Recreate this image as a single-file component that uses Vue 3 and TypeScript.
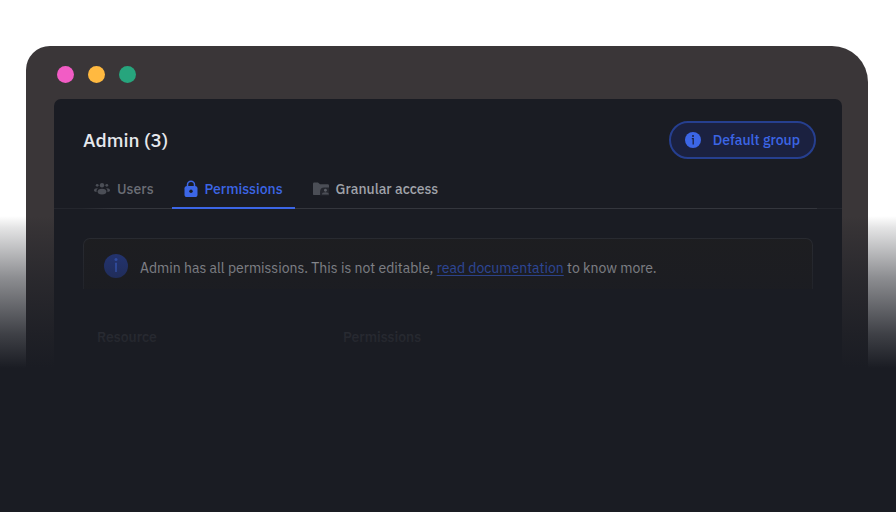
<script setup lang="ts">
import { ref } from 'vue'

type TabId = 'users' | 'permissions' | 'granular'

interface Tab {
  id: TabId
  label: string
}

const tabs: Tab[] = [
  { id: 'users', label: 'Users' },
  { id: 'permissions', label: 'Permissions' },
  { id: 'granular', label: 'Granular access' },
]
const active = ref<TabId>('permissions')
const dots: string[] = ['pink', 'amber', 'green']
const columns: string[] = ['Resource', 'Permissions']
</script>

<template>
  <main class="stage">
    <section class="window">
      <div class="dots">
        <span v-for="dot in dots" :key="dot" class="dot" :class="dot"></span>
      </div>
      <div class="panel">
        <header class="head">
          <h1>Admin (3)</h1>
          <button type="button" class="pill">
            <svg width="16" height="16" viewBox="0 0 16 16" aria-hidden="true">
              <circle cx="8" cy="8" r="8" fill="#3c66e6" />
              <circle cx="8" cy="4" r="1" fill="#1b2140" />
              <path d="M6.800 6.600H8.200V12.500" fill="none" stroke="#1b2140" stroke-width="1.300" />
            </svg>
            <span>Default group</span>
          </button>
        </header>

        <nav class="tabs">
          <button
            v-for="tab in tabs"
            :key="tab.id"
            type="button"
            class="tab"
            :class="[tab.id, { active: active === tab.id }]"
            @click="active = tab.id"
          >
            <svg v-if="tab.id === 'users'" width="16" height="16" viewBox="0 0 16 16" fill="currentColor" aria-hidden="true">
              <circle cx="8" cy="4.300" r="2.200" />
              <circle cx="3.200" cy="4.300" r="1.400" />
              <circle cx="12.800" cy="4.300" r="1.400" />
              <ellipse cx="8" cy="10.600" rx="4.400" ry="2.900" />
              <path d="M3.900 7.300C1.600 7 0 8 0 9.200c0 1.100 1 1.700 2.600 1.700-.3-1.400.2-2.700 1.300-3.600zM12.100 7.300c2.300-.3 3.900.7 3.900 1.900 0 1.100-1 1.700-2.600 1.700.3-1.400-.2-2.700-1.300-3.600z" />
            </svg>
            <svg v-else-if="tab.id === 'permissions'" width="14" height="18" viewBox="0 0 14 18" aria-hidden="true">
              <path d="M3.500 7V4.800a3.500 3.500 0 0 1 7 0V7" fill="none" stroke="currentColor" stroke-width="1.500" />
              <rect x="0.500" y="6" width="13" height="11" rx="2.600" fill="currentColor" />
              <circle cx="7" cy="11.300" r="1.700" fill="#1a1c23" />
            </svg>
            <svg v-else width="16" height="16" viewBox="0 0 17 16" aria-hidden="true">
              <path d="M0 2.300Q0 1 1.300 1h4L7.500 3H15.700q1.300 0 1.300 1.300V14.500H1.300Q0 14.500 0 13.200z" fill="#4b4e56" />
              <path d="M7.500 14.800V11q0-4.500 4.500-4.500H17v8.300z" fill="#25272e" />
              <circle cx="13.200" cy="9.300" r="1.500" fill="#5b5e66" />
              <path d="M9.500 13.800q0-2.300 3.700-2.300t3.600 2.300z" fill="#4b4e56" />
            </svg>
            <span>{{ tab.label }}</span>
          </button>
        </nav>

        <div class="content">
          <div class="notice" role="note">
            <svg width="24" height="24" viewBox="0 0 24 24" aria-hidden="true">
              <circle cx="12" cy="12" r="12" fill="#273e91" />
              <circle cx="12" cy="5.500" r="1.500" fill="#3c66e6" />
              <path d="M12 8.800V18" stroke="#3c66e6" stroke-width="2" />
            </svg>
            <p>
              Admin has all permissions. This is not editable,
              <a href="#docs">read documentation</a> to know more.
            </p>
          </div>
          <table>
            <thead>
              <tr>
                <th v-for="column in columns" :key="column" scope="col">{{ column }}</th>
              </tr>
            </thead>
          </table>
        </div>
      </div>
    </section>
    <div class="fade"></div>
  </main>
</template>

<style>
body {
  margin: 0;
  background: #1a1c23;
}
</style>

<style scoped>
.stage {
  position: relative;
  box-sizing: border-box;
  min-height: 100vh;
  padding: 46px 28px 0 26px;
  background: #fff;
  font-family: "IBM Plex Sans", Roboto, "Liberation Sans", sans-serif;
  display: flex;
  flex-direction: column;
}
.window {
  flex: 1;
  display: flex;
  flex-direction: column;
  padding: 20px 26px 0 28px;
  background: #3a3638;
  border-radius: 24px 36px 0 0;
}
.dots {
  display: flex;
  gap: 14px;
  padding: 0 3px 16px;
}
.dot {
  width: 17px;
  height: 17px;
  border-radius: 50%;
}
.pink { background: #f25cc5; }
.amber { background: #ffb940; }
.green { background: #27a57d; }
.panel {
  flex: 1;
  background: #1a1c23;
  border-radius: 7px 7px 0 0;
}
.head {
  display: flex;
  align-items: center;
  justify-content: space-between;
  padding: 22px 26px 0 29px;
}
h1 {
  margin: 0;
  color: #e6e8ed;
  font-size: 19px;
  font-weight: 500;
  line-height: 24px;
}
.pill {
  display: flex;
  align-items: center;
  gap: 12px;
  height: 38px;
  padding: 0 14px;
  border: 2px solid #263f8f;
  border-radius: 19px;
  background: #1b2140;
  color: #3c66e6;
  font: 500 14px/20px "IBM Plex Sans", Roboto, "Liberation Sans", sans-serif;
}
.tabs {
  display: flex;
  gap: 6px;
  padding: 8px 28px 0;
  border-bottom: 1px solid;
  border-image: linear-gradient(90deg, #24262d 29px, #34363d 60px, #34363d calc(100% - 26px), #24262d calc(100% - 26px)) 1;
}
.tab {
  display: flex;
  align-items: center;
  gap: 7px;
  height: 42px;
  padding: 4px 12px 0;
  margin-bottom: -1px;
  border: 0;
  border-bottom: 2px solid transparent;
  background: none;
  color: #6b6e76;
  font: 500 14px/20px "IBM Plex Sans", Roboto, "Liberation Sans", sans-serif;
}
.tab.users svg { color: #4b4e56; }
.tab.granular { color: #a0a3aa; }
.tab.active {
  color: #3c66e6;
  border-bottom-color: #3c66e6;
}
.content {
  padding: 29px 29px 0;
}
.notice {
  display: flex;
  align-items: flex-start;
  gap: 12px;
  padding: 15px 20px 7px;
  border: 1px solid #2c2e34;
  border-bottom: 0;
  border-radius: 7px 7px 0 0;
  background: #1e1e20;
}
.notice p {
  margin: 0;
  color: #c6c8cd;
  font-size: 14px;
  line-height: 28px;
}
.notice a {
  color: #3c66e6;
  text-underline-offset: 2px;
}
table {
  width: 100%;
  margin-top: 36px;
  border-collapse: collapse;
  table-layout: fixed;
}
th {
  padding: 0 14px;
  color: #70737b;
  font-size: 14px;
  font-weight: 500;
  line-height: 24px;
  text-align: left;
}
th:first-child {
  width: 218px;
}
.fade {
  position: absolute;
  inset: 216px 0 0;
  pointer-events: none;
  background: linear-gradient(
    rgba(26, 28, 35, 0),
    rgba(26, 28, 35, 0.12) 12px,
    rgba(26, 28, 35, 0.5) 62px,
    rgba(26, 28, 35, 0.84) 118px,
    #1a1c23 152px
  );
}
</style>
